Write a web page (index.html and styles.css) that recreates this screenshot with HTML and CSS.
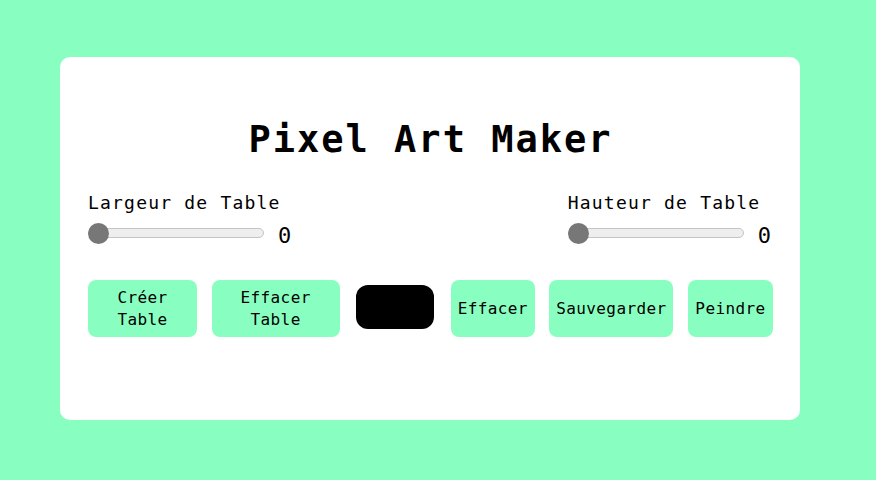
FILE: index.html
```html
<!DOCTYPE html>
<html lang="fr">
<head>
<meta charset="utf-8">
<title>Pixel Art Maker</title>
<link rel="stylesheet" href="styles.css">
</head>
<body>
<div class="card">
  <h1 class="title">Pixel Art Maker</h1>
  <div class="controls">
    <div class="field">
      <label class="label">Largeur de Table</label>
      <div class="slider-row">
        <input class="slider" type="range" min="0" max="50" value="0">
        <span class="val">0</span>
      </div>
    </div>
    <div class="field">
      <label class="label">Hauteur de Table</label>
      <div class="slider-row">
        <input class="slider" type="range" min="0" max="50" value="0">
        <span class="val">0</span>
      </div>
    </div>
  </div>
  <div class="buttons">
    <button class="btn w-creer">Créer Table</button>
    <button class="btn w-effacer-table">Effacer Table</button>
    <div class="swatch"></div>
    <button class="btn w-effacer">Effacer</button>
    <button class="btn w-sauv">Sauvegarder</button>
    <button class="btn w-peindre">Peindre</button>
  </div>
</div>
</body>
</html>
```
FILE: styles.css
```css
html, body {
  margin: 0;
  padding: 0;
}
body {
  background: #88ffc0;
  width: 876px;
  height: 480px;
  padding-top: 57px;
  box-sizing: border-box;
  font-family: "DejaVu Sans Mono", "Liberation Mono", monospace;
  color: #000;
}
.card {
  margin-left: 60px;
  width: 740px;
  height: 363px;
  background: #fff;
  border-radius: 10px;
  box-sizing: border-box;
  padding: 61px 27px 0 28px;
}
.title {
  margin: 0;
  text-align: center;
  font-size: 37px;
  font-weight: bold;
  letter-spacing: 2px;
  line-height: 43px;
  height: 43px;
}
.controls {
  margin-top: 31px;
  display: flex;
  justify-content: space-between;
}
.field {
  display: flex;
  flex-direction: column;
}
.label {
  font-size: 18px;
  letter-spacing: 1.2px;
  line-height: 21px;
}
.slider-row {
  margin-top: 9px;
  display: flex;
  align-items: center;
  height: 22px;
}
.slider {
  -webkit-appearance: none;
  appearance: none;
  margin: 0;
  width: 176px;
  height: 10px;
  background: #eeeeee;
  border: 1px solid #c4c4c4;
  border-radius: 5px;
  box-sizing: border-box;
  outline: none;
}
.slider::-webkit-slider-thumb {
  -webkit-appearance: none;
  appearance: none;
  width: 21px;
  height: 21px;
  border-radius: 50%;
  background: #777777;
  border: none;
  margin-left: -1px;
}
.val {
  margin-left: 14px;
  margin-right: 2px;
  margin-top: 6px;
  font-size: 22px;
  line-height: 22px;
}
.buttons {
  margin-top: 36px;
  display: flex;
  justify-content: space-between;
  align-items: flex-start;
}
.btn {
  height: 57px;
  border: none;
  border-radius: 8px;
  background: #88ffc0;
  font-family: "DejaVu Sans Mono", "Liberation Mono", monospace;
  font-size: 16px;
  letter-spacing: 0.4px;
  line-height: 22px;
  color: #000;
  padding: 0 6px;
  text-align: center;
}
.w-creer { width: 109px; }
.w-effacer-table { width: 128px; }
.w-effacer { width: 84px; }
.w-sauv { width: 124px; }
.w-peindre { width: 85px; }
.swatch {
  width: 78px;
  height: 44px;
  margin: 5px 2px 0 2px;
  background: #000;
  border-radius: 12px;
}
```
